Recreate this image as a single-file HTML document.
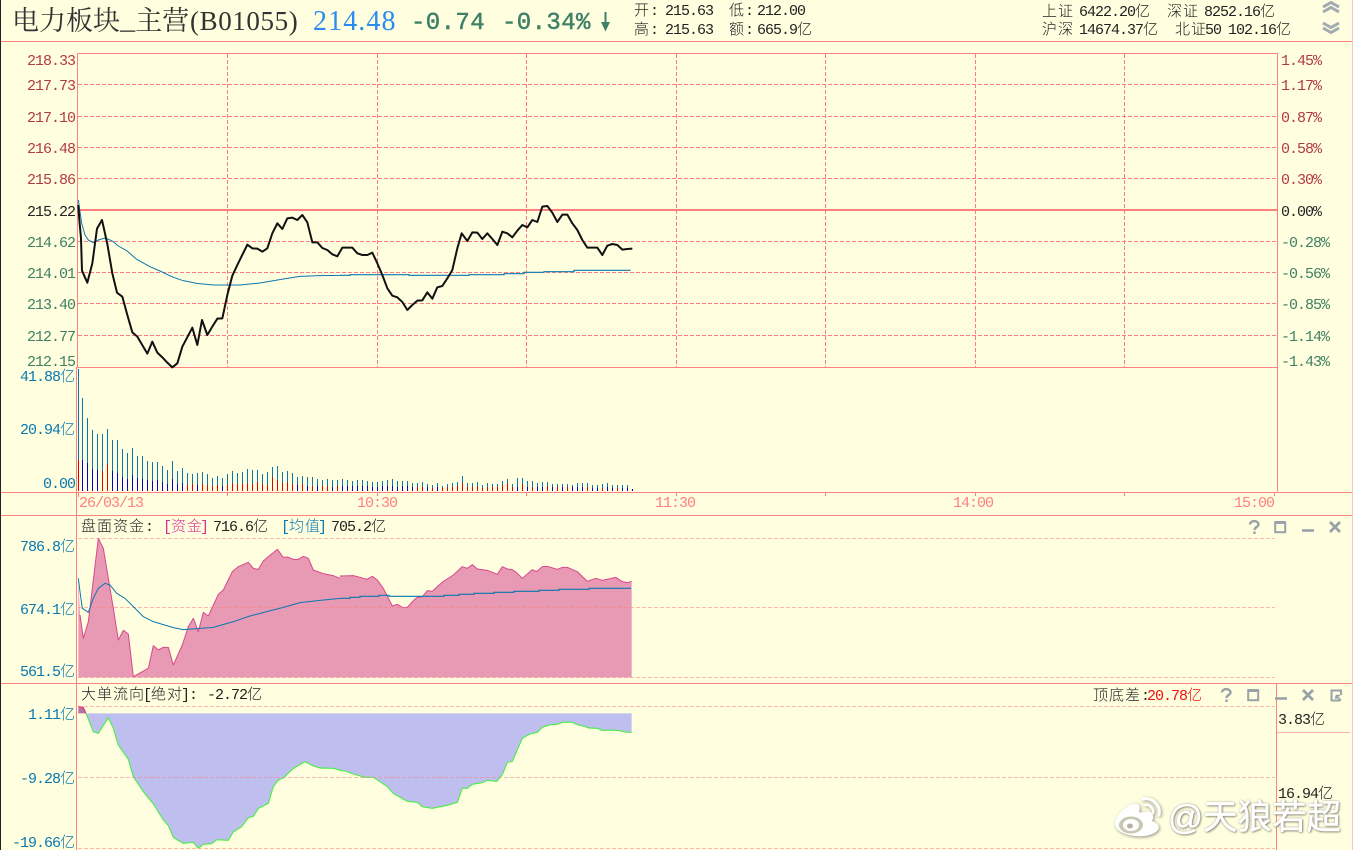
<!DOCTYPE html>
<html lang="zh-CN">
<head>
<meta charset="utf-8">
<title>电力板块_主营(B01055)</title>
<style>
html,body{margin:0;padding:0;background:#ffffe0;width:1353px;height:850px;overflow:hidden}
#w{position:relative;width:1353px;height:850px;overflow:hidden;background:#ffffe0}
svg{position:absolute;left:0;top:0}
text{font-family:"Liberation Mono","WenQuanYi Zen Hei","Noto Sans CJK SC",monospace;font-size:15px;letter-spacing:-1px;fill:#222;white-space:pre}
tspan.c{font-size:15px;letter-spacing:1px;font-weight:300;font-family:"Noto Sans CJK SC","WenQuanYi Zen Hei",sans-serif}
.r text{fill:#b23a48}
.g text{fill:#3f7f62}
.b text{fill:#0a78b0}
.o text{fill:#ff8080}
#wm{position:absolute;left:1168px;top:798px;font:34.5px/40px "Liberation Sans","Noto Sans CJK SC",sans-serif;color:#fff;-webkit-text-stroke:.5px #fff;text-shadow:1px 1px 2px #7f7f70,0 0 2px #909080;white-space:nowrap}
</style>
</head>
<body>
<div id="w">
<svg width="1353" height="850" viewBox="0 0 1353 850" xmlns="http://www.w3.org/2000/svg" fill="none" shape-rendering="auto">

<!-- frame -->
<g stroke="#ff8080" stroke-width="1" shape-rendering="crispEdges">
<path d="M0 41.5H1353M77.5 53.5H1277.5V491.5M77.5 53.5V367.5M77.5 367.5H1277.5M0 492.5H1353M0 515.5H1353M0 683.5H1353M76.5 367V850M1276.5 684V850"/>
<path d="M77 210H1277" stroke-width="2"/>
<path d="M1352.5 0V850" stroke="#ffc0c0"/>
<path d="M1277 732.5H1350" stroke="#ffb0b0"/>
<path d="M78.5 492V497M227.5 492V496M377.5 492V496M526.5 492V496M676.5 492V496M825.5 492V496M975.5 492V496M1124.5 492V496M1274.5 492V496"/>
</g>
<path d="M.5 0V850" stroke="#222" stroke-width="1" shape-rendering="crispEdges"/>

<!-- main grid -->
<g stroke="#ff7a86" stroke-width="1" stroke-dasharray="4 2" shape-rendering="crispEdges">
<path d="M78 84.5H1277M78 116.5H1277M78 147.5H1277M78 178.5H1277M78 241.5H1277M78 272.5H1277M78 303.5H1277M78 335.5H1277"/>
<path d="M227.5 54V367M377.5 54V367M526.5 54V367M676.5 54V367M825.5 54V367M975.5 54V367M1124.5 54V367"/>
</g>

<!-- main avg -->
<g transform="translate(0,180) scale(.33333)" stroke="#0a78b0" stroke-width="3" stroke-linejoin="round">
<polyline points="235,60 245,130 255,165 265,180 280,188 295,180 315,174 335,182 355,198 380,212 410,238 450,260 480,273 520,292 550,302 590,310 640,315 720,315 780,309 850,297 900,289 960,287 1020,286"/>
</g>
<g transform="translate(340,180) scale(.33333)" stroke="#0a78b0" stroke-width="3.6">
<path d="M0 286H30V284H207V286H387V284H492V281H552V277H612V275H702V271H872"/>
</g>
<!-- main price -->
<g transform="translate(0,180) scale(.33333)" stroke="#111" stroke-width="6" stroke-linejoin="round">
<polyline points="235,75 238,120 243,175 246,272 262,308 277,250 291,146 306,120 322,192 337,280 351,338 367,350 382,405 397,457 412,470 442,521 457,485 472,518 487,532 502,548 517,562 532,550 547,500 577,443 592,495 606,420 622,465 637,440 652,416 667,415 682,345 697,287 712,255 742,194 757,205 772,206 787,215 802,205 817,160 832,130 847,147 862,115 877,113 892,120 907,105 922,127 937,187 952,187 967,204 982,210 997,223 1012,229 1020,215"/>
</g>
<g transform="translate(340,180) scale(.33333)" stroke="#111" stroke-width="6" stroke-linejoin="round">
<polyline points="0,215 7,203 37,203 52,220 67,225 82,225 97,218 112,250 127,285 142,325 157,347 172,352 187,366 202,390 217,375 232,362 247,361 262,337 277,356 292,322 307,318 322,295 337,270 352,205 365,160 382,183 397,157 412,158 427,177 442,160 457,177 472,195 487,155 502,160 517,172 532,152 547,135 562,142 577,120 592,126 607,80 622,78 637,98 652,126 667,104 682,104 697,130 712,150 727,180 742,203 772,203 787,225 802,197 817,192 832,195 847,209 862,207 877,206"/>
</g>

<!-- volume bars -->
<g stroke-width="1" shape-rendering="crispEdges">
<path stroke="#0a78b0" d="M78.5 369V491M82.5 398V491M87.5 418V491M92.5 430V491M97.5 434V491M102.5 434V491M107.5 429V491M112.5 440V491M117.5 440V491M122.5 449V491M127.5 453V491M132.5 448V491M137.5 456V491M142.5 456V491M147.5 461V491M152.5 462V491M157.5 462V491M162.5 466V491M167.5 470V491M172.5 461V491M177.5 471V491M182.5 468V491M187.5 473V491M192.5 474V491M197.5 473V491M202.5 472V491M207.5 474V491M212.5 478V491M217.5 476V491M222.5 478V491M227.5 474V491M232.5 471V491M237.5 473V491M242.5 472V491M247.5 469V491M252.5 470V491M257.5 470V491M262.5 474V491M267.5 472V491M272.5 467V491M277.5 466V491M282.5 472V491M287.5 471V491M292.5 473V491M297.5 477V491M302.5 476V491M307.5 477V491M312.5 477V491M317.5 479V491M322.5 480V491M327.5 479V491M332.5 480V491M337.5 480V491M342.5 479V491M347.5 480V491M352.5 481V491M357.5 480V491M362.5 480V491M367.5 481V491M372.5 482V491M377.5 482V491M382.5 481V491M387.5 480V491M392.5 479V491M397.5 481V491M402.5 481V491M407.5 481V491M412.5 483V491M417.5 483V491M422.5 482V491M427.5 484V491M432.5 485V491M437.5 483V491M442.5 486V491M447.5 484V491M452.5 483V491M457.5 482V491M462.5 476V491M467.5 483V491M472.5 483V491M477.5 482V491M482.5 485V491M487.5 483V491M492.5 484V491M497.5 484V491M502.5 481V491M507.5 479V491M512.5 484V491M517.5 478V491M522.5 478V491M527.5 481V491M532.5 481V491M537.5 483V491M542.5 482V491M547.5 482V491M552.5 484V491M557.5 484V491M562.5 484V491M567.5 484V491M572.5 485V491M577.5 483V491M582.5 483V491M587.5 483V491M592.5 485V491M597.5 485V491M602.5 484V491M607.5 483V491M612.5 485V491M617.5 485V491M622.5 485V491M627.5 485V491"/>
<path stroke="#0000e0" d="M82.5 460V491M87.5 463V491M92.5 469V491M97.5 470V491M112.5 471V491M117.5 473V491M122.5 477V491M127.5 479V491M132.5 475V491M137.5 478V491M142.5 479V491M147.5 480V491M152.5 481V491M157.5 480V491M162.5 482V491M167.5 484V491M172.5 479V491M177.5 484V491M182.5 483V491M197.5 485V491M222.5 486V491M297.5 485V491M307.5 486V491M317.5 486V491M332.5 487V491M342.5 486V491M347.5 486V491M352.5 486V491M357.5 486V491M362.5 486V491M367.5 486V491M372.5 487V491M377.5 487V491M382.5 486V491M387.5 486V491M392.5 486V491M397.5 487V491M402.5 486V491M407.5 486V491M412.5 487V491M427.5 487V491M437.5 487V491M517.5 487V491M527.5 487V491M537.5 487V491M542.5 487V491M552.5 487V491M562.5 487V491M572.5 487V491M577.5 487V491M582.5 487V491M592.5 488V491M597.5 488V491M607.5 487V491M612.5 488V491M622.5 488V491M627.5 488V491M632.5 489V491"/>
<path stroke="#e00000" d="M78.5 460V491M102.5 471V491M107.5 464V491M187.5 485V491M192.5 484V491M202.5 484V491M207.5 485V491M212.5 486V491M217.5 485V491M227.5 485V491M232.5 483V491M237.5 484V491M242.5 484V491M247.5 483V491M252.5 484V491M257.5 482V491M262.5 484V491M267.5 485V491M272.5 477V491M277.5 480V491M282.5 483V491M287.5 482V491M292.5 484V491M302.5 484V491M312.5 486V491M322.5 486V491M327.5 486V491M337.5 486V491M417.5 487V491M422.5 487V491M432.5 488V491M442.5 488V491M447.5 487V491M452.5 487V491M457.5 486V491M462.5 483V491M467.5 487V491M472.5 487V491M477.5 486V491M482.5 488V491M487.5 487V491M492.5 487V491M497.5 487V491M502.5 485V491M507.5 483V491M512.5 487V491M522.5 484V491M532.5 487V491M547.5 486V491M557.5 487V491M567.5 487V491M587.5 487V491M602.5 488V491M617.5 488V491"/>
</g>

<!-- fund fill -->
<g transform="translate(0,515) scale(.33333)">
<polygon fill="#e899b4" points="235,190 240,300 250,370 265,320 295,70 310,100 325,190 340,280 355,375 370,346 385,357 400,485 445,460 460,392 475,405 490,397 505,397 520,450 547,390 565,335 580,310 595,350 610,292 625,303 655,238 670,225 697,170 715,155 745,142 760,160 775,163 790,138 805,125 832,103 850,127 862,126 880,133 895,133 910,124 925,130 940,165 970,176 1000,182 1020,190 1020,487 235,487"/>
<polyline stroke="#d8488c" stroke-width="3" stroke-linejoin="round" points="240,300 250,370 265,320 295,70 310,100 325,190 340,280 355,375 370,346 385,357 400,485 445,460 460,392 475,405 490,397 505,397 520,450 547,390 565,335 580,310 595,350 610,292 625,303 655,238 670,225 697,170 715,155 745,142 760,160 775,163 790,138 805,125 832,103 850,127 862,126 880,133 895,133 910,124 925,130 940,165 970,176 1000,182 1020,190"/>
</g>
<g transform="translate(340,515) scale(.33333)">
<polygon fill="#e899b4" points="0,183 40,182 60,187 80,193 97,184 112,195 130,220 157,273 172,268 187,277 202,277 222,255 232,247 247,245 262,227 277,229 295,212 312,198 340,180 367,155 382,160 397,149 412,162 442,166 472,178 487,155 502,162 517,164 530,173 547,190 577,164 590,170 607,155 622,154 652,163 667,157 682,157 712,170 742,199 767,190 787,196 827,187 847,200 862,203 875,199 875,487 0,487"/>
<polyline stroke="#d8488c" stroke-width="3" stroke-linejoin="round" points="0,183 40,182 60,187 80,193 97,184 112,195 130,220 157,273 172,268 187,277 202,277 222,255 232,247 247,245 262,227 277,229 295,212 312,198 340,180 367,155 382,160 397,149 412,162 442,166 472,178 487,155 502,162 517,164 530,173 547,190 577,164 590,170 607,155 622,154 652,163 667,157 682,157 712,170 742,199 767,190 787,196 827,187 847,200 862,203 875,199"/>
</g>
<!-- fund grid -->
<g stroke="#ff8080" stroke-opacity=".55" stroke-width="1" stroke-dasharray="4 2" shape-rendering="crispEdges">
<path d="M78 538.5H1275M78 607.5H1275M78 677.5H1275"/>
</g>
<!-- fund avg -->
<g transform="translate(0,515) scale(.33333)" stroke="#0a78b0" stroke-width="3" stroke-linejoin="round">
<polyline points="235,190 240,230 247,280 265,292 280,250 295,220 315,205 330,210 350,235 375,250 400,275 430,305 460,320 520,338 550,344 640,337 700,320 750,303 800,290 850,277 900,263 960,256 1020,250"/>
</g>
<g transform="translate(340,515) scale(.33333)" stroke="#0a78b0" stroke-width="3.6">
<path d="M0 250H30V247H60V244H117V241H147V244H247H312V241H357V238H402V235H462V232H522V229H597V226H657V223H747V220H873"/>
</g>

<!-- flow fill -->
<g transform="translate(0,680) scale(.33333)">
<polygon fill="#bfbfef" points="258,100 280,155 295,160 325,113 340,145 355,195 385,238 400,290 430,335 460,372 490,420 505,437 520,472 550,490 580,487 595,505 610,493 635,491 650,479 685,481 700,456 725,440 745,413 760,409 775,385 805,370 820,320 835,300 850,294 880,265 915,245 940,258 960,264 1000,265 1020,271 1020,100"/>
<polygon fill="#b074a8" points="235,79 250,82 258,100 235,100"/>
<polyline stroke="#e8305a" stroke-width="3" points="235,79 250,82 258,100"/>
<polyline stroke="#48ee48" stroke-width="3.4" stroke-linejoin="round" points="258,100 280,155 295,160 325,113 340,145 355,195 385,238 400,290 430,335 460,372 490,420 505,437 520,472 550,490 580,487 595,505 610,493 635,491 650,479 685,481 700,456 725,440 745,413 760,409 775,385 805,370 820,320 835,300 850,294 880,265 915,245 940,258 960,264 1000,265 1020,271"/>
</g>
<g transform="translate(340,680) scale(.33333)">
<polygon fill="#bfbfef" points="0,271 15,273 40,282 75,292 100,292 142,320 160,340 202,364 232,367 247,380 277,385 322,376 352,367 367,325 382,325 397,313 427,308 442,301 470,304 487,284 502,247 517,244 547,175 567,163 592,157 607,142 630,134 652,133 667,127 697,127 712,134 727,137 747,144 772,145 787,151 832,151 862,157 875,157 875,100 0,100"/>
<polyline stroke="#48ee48" stroke-width="3.4" stroke-linejoin="round" points="0,271 15,273 40,282 75,292 100,292 142,320 160,340 202,364 232,367 247,380 277,385 322,376 352,367 367,325 382,325 397,313 427,308 442,301 470,304 487,284 502,247 517,244 547,175 567,163 592,157 607,142 630,134 652,133 667,127 697,127 712,134 727,137 747,144 772,145 787,151 832,151 862,157 875,157"/>
</g>
<g stroke="#ff8080" stroke-opacity=".55" stroke-width="1" stroke-dasharray="4 2" shape-rendering="crispEdges">
<path d="M78 706.5H1275M78 777.5H1275M78 848.5H1275"/>
</g>

<!-- header -->
<text x="12" y="30" style="font-family:'Noto Serif CJK SC',serif;font-size:27px;letter-spacing:0;fill:#333">电力板块_主营</text>
<text x="190" y="30" style="font-family:'Liberation Serif',serif;font-size:27px;letter-spacing:.6px;fill:#333">(B01055)</text>
<text x="313" y="30" style="font-family:'Liberation Serif',serif;font-size:28px;letter-spacing:1.1px;fill:#2a8cf0">214.48</text>
<text x="411" y="29" style="font-size:24px;letter-spacing:.4px;fill:#3f8068;stroke:#3f8068;stroke-width:.5">-0.74</text>
<text x="502" y="29" style="font-size:24px;letter-spacing:.4px;fill:#3f8068;stroke:#3f8068;stroke-width:.5">-0.34%</text>
<path d="M605.5 12V25" stroke="#3f8068" stroke-width="2"/>
<polygon points="601,22 610,22 605.5,31.5" fill="#3f8068"/>

<text x="634" y="15"><tspan class="c">开</tspan>:<tspan x="665">215.63</tspan></text>
<text x="729" y="15"><tspan class="c">低</tspan>:<tspan x="757">212.00</tspan></text>
<text x="634" y="34"><tspan class="c">高</tspan>:<tspan x="665">215.63</tspan></text>
<text x="729" y="34"><tspan class="c">额</tspan>:<tspan x="757">665.9</tspan><tspan class="c">亿</tspan></text>

<text x="1042" y="16"><tspan class="c">上证</tspan><tspan x="1079">6422.20</tspan><tspan class="c">亿</tspan></text>
<text x="1167" y="16"><tspan class="c">深证</tspan><tspan x="1204">8252.16</tspan><tspan class="c">亿</tspan></text>
<text x="1042" y="34"><tspan class="c">沪深</tspan><tspan x="1079">14674.37</tspan><tspan class="c">亿</tspan></text>
<text x="1175" y="34"><tspan class="c">北证</tspan><tspan x="1205">50</tspan><tspan x="1228">102.16</tspan><tspan class="c">亿</tspan></text>

<!-- chevrons -->
<g stroke="#a2aab2" stroke-width="3" fill="none">
<path d="M1323 7L1331 2.5L1339 7M1323 12L1331 7.5L1339 12"/>
<path d="M1323 23L1331 27.5L1339 23M1323 28L1331 32.5L1339 28"/>
</g>

<!-- left axis labels -->
<g class="r">
<text x="27" y="65">218.33</text><text x="27" y="90">217.73</text><text x="27" y="122">217.10</text><text x="27" y="153">216.48</text><text x="27" y="184">215.86</text>
<text x="1281" y="65">1.45%</text><text x="1281" y="90">1.17%</text><text x="1281" y="122">0.87%</text><text x="1281" y="153">0.58%</text><text x="1281" y="184">0.30%</text>
</g>
<text x="27" y="216">215.22</text><text x="1281" y="216">0.00%</text>
<g class="g">
<text x="27" y="247">214.62</text><text x="27" y="278">214.01</text><text x="27" y="309">213.40</text><text x="27" y="341">212.77</text><text x="27" y="366">212.15</text>
<text x="1281" y="247">-0.28%</text><text x="1281" y="278">-0.56%</text><text x="1281" y="309">-0.85%</text><text x="1281" y="341">-1.14%</text><text x="1281" y="366">-1.43%</text>
</g>

<g class="b">
<text x="20" y="381">41.88<tspan class="c">亿</tspan></text>
<text x="20" y="434">20.94<tspan class="c">亿</tspan></text>
<text x="43" y="488">0.00</text>
<text x="20" y="551">786.8<tspan class="c">亿</tspan></text>
<text x="20" y="614">674.1<tspan class="c">亿</tspan></text>
<text x="20" y="676">561.5<tspan class="c">亿</tspan></text>
<text x="28" y="719">1.11<tspan class="c">亿</tspan></text>
<text x="20" y="783">-9.28<tspan class="c">亿</tspan></text>
<text x="12" y="847">-19.66<tspan class="c">亿</tspan></text>
</g>

<g class="o">
<text x="79" y="507">26/03/13</text><text x="357" y="507">10:30</text><text x="655" y="507">11:30</text><text x="953" y="507">14:00</text><text x="1234" y="507">15:00</text>
</g>

<!-- fund header -->
<text x="81" y="531"><tspan class="c">盘面资金</tspan>:</text>
<text x="163" y="531" style="fill:#d83090">[<tspan class="c">资金</tspan><tspan dx="-3">]</tspan></text>
<text x="213" y="531">716.6<tspan class="c">亿</tspan></text>
<text x="281" y="531" style="fill:#0a78b0">[<tspan class="c">均值</tspan><tspan dx="-3">]</tspan></text>
<text x="331" y="531">705.2<tspan class="c">亿</tspan></text>

<!-- flow header -->
<text x="81" y="699"><tspan class="c">大单流向</tspan><tspan dx="-2">[</tspan><tspan class="c">绝对</tspan><tspan dx="-2">]:</tspan></text>
<text x="207" y="699">-2.72<tspan class="c">亿</tspan></text>
<text x="1093" y="700"><tspan class="c">顶底差</tspan>:</text>
<text x="1147" y="700" style="fill:#f01010">20.78<tspan class="c">亿</tspan></text>
<text x="1278" y="724">3.83<tspan class="c">亿</tspan></text>
<text x="1278" y="798">16.94<tspan class="c">亿</tspan></text>

<!-- window icons, fund -->
<g stroke="#99a1a9" stroke-width="2.4" fill="none">
<path d="M1250 524.5C1250 520 1258.5 520 1258.5 524.5C1258.5 527 1254.5 527 1254.5 530"/>
<path d="M1254.5 531.5V534"/>
<rect x="1275.2" y="522.2" width="10" height="10" stroke-width="2"/>
<path d="M1275 522.5H1285" stroke-width="3"/>
<path d="M1302 530.5H1314" stroke-width="2.6"/>
<path d="M1330 522L1340 532M1340 522L1330 532" stroke-width="2.8"/>
</g>
<!-- window icons, flow -->
<g stroke="#99a1a9" stroke-width="2.4" fill="none">
<path d="M1222 692.5C1222 688 1230.5 688 1230.5 692.5C1230.5 695 1226.5 695 1226.5 698"/>
<path d="M1226.5 699.5V702"/>
<rect x="1248.2" y="690.2" width="10" height="10" stroke-width="2"/>
<path d="M1248 690.5H1258" stroke-width="3"/>
<path d="M1275 698.5H1287" stroke-width="2.6"/>
<path d="M1303 690L1313 700M1313 690L1303 700" stroke-width="2.8"/>
<path d="M1340 700.5H1331.5V690.5H1341V695" stroke-width="2"/>
<path d="M1336 695.5L1341 700.5M1336 695.5H1340M1336 695.5V699" stroke-width="1.6"/>
</g>

<!-- watermark logo -->
<g style="filter:drop-shadow(1px 1px 1.5px #8f8f80)">
<path fill="#fff" d="M1146 812C1152 810 1155 816 1152 821C1158 823 1160 827 1158 830C1154 835 1145 837 1135 836C1124 835 1115 830 1115 824C1115 816 1124 807 1133 804C1139 802 1141 806 1139 812C1141 813 1143 812 1146 812Z"/>
<ellipse cx="1131" cy="825" rx="12" ry="8.5" fill="#c8c8b4"/>
<ellipse cx="1131" cy="825" rx="8" ry="6" fill="#fff"/>
<ellipse cx="1130" cy="826" rx="3" ry="2.5" fill="#b4b4a0"/>
<path d="M1143 799C1152 797 1161 805 1159 815" stroke="#fff" stroke-width="3" stroke-linecap="round"/>
<path d="M1145 805C1149 804 1154 808 1153 813" stroke="#fff" stroke-width="2.6" stroke-linecap="round"/>
</g>
</svg>
<div id="wm">@天狼若超</div>
</div>
</body>
</html>
